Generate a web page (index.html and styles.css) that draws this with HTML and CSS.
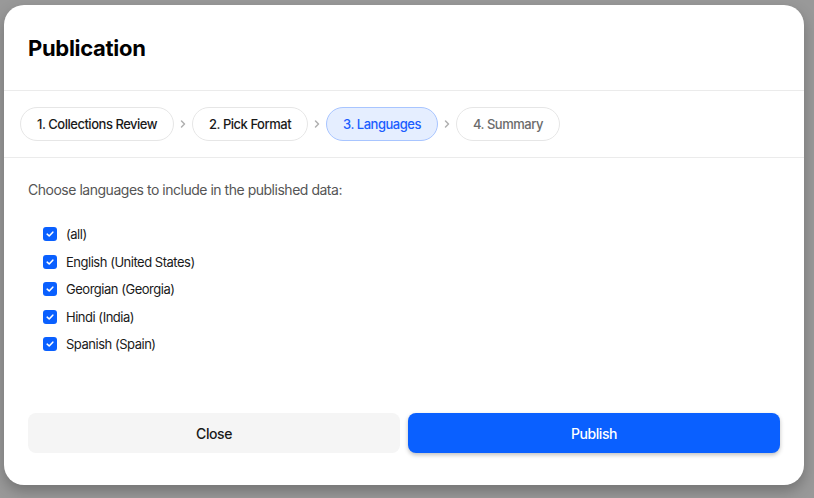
FILE: index.html
```html
<!DOCTYPE html>
<html lang="en">
<head>
    <meta charset="UTF-8">
    <meta name="viewport" content="width=device-width, initial-scale=1.0">
    <title>Publication</title>
    <link rel="stylesheet" href="styles.css">
</head>
<body>
    <div class="backdrop">
        <div class="modal">
            <div class="modal-header">
                <h1>Publication</h1>
            </div>

            <div class="steps">
                <div class="step">1. Collections Review</div>
                <span class="chevron"><svg width="8" height="10" viewBox="0 0 8 10"><path d="M2.5 2 L5.5 5 L2.5 8" fill="none" stroke="#b0b0b0" stroke-width="1.5" stroke-linecap="round" stroke-linejoin="round"/></svg></span>
                <div class="step">2. Pick Format</div>
                <span class="chevron"><svg width="8" height="10" viewBox="0 0 8 10"><path d="M2.5 2 L5.5 5 L2.5 8" fill="none" stroke="#b0b0b0" stroke-width="1.5" stroke-linecap="round" stroke-linejoin="round"/></svg></span>
                <div class="step active">3. Languages</div>
                <span class="chevron"><svg width="8" height="10" viewBox="0 0 8 10"><path d="M2.5 2 L5.5 5 L2.5 8" fill="none" stroke="#b0b0b0" stroke-width="1.5" stroke-linecap="round" stroke-linejoin="round"/></svg></span>
                <div class="step pending">4. Summary</div>
            </div>

            <div class="modal-body">
                <p class="hint">Choose languages to include in the published data:</p>
                <div class="lang-list">
                    <label class="lang"><span class="check"><svg width="10" height="10" viewBox="0 0 10 10"><path d="M2.2 5.2 L4.2 7 L7.8 3.2" fill="none" stroke="#fff" stroke-width="1.6" stroke-linecap="round" stroke-linejoin="round"/></svg></span>(all)</label>
                    <label class="lang"><span class="check"><svg width="10" height="10" viewBox="0 0 10 10"><path d="M2.2 5.2 L4.2 7 L7.8 3.2" fill="none" stroke="#fff" stroke-width="1.6" stroke-linecap="round" stroke-linejoin="round"/></svg></span>English (United States)</label>
                    <label class="lang"><span class="check"><svg width="10" height="10" viewBox="0 0 10 10"><path d="M2.2 5.2 L4.2 7 L7.8 3.2" fill="none" stroke="#fff" stroke-width="1.6" stroke-linecap="round" stroke-linejoin="round"/></svg></span>Georgian (Georgia)</label>
                    <label class="lang"><span class="check"><svg width="10" height="10" viewBox="0 0 10 10"><path d="M2.2 5.2 L4.2 7 L7.8 3.2" fill="none" stroke="#fff" stroke-width="1.6" stroke-linecap="round" stroke-linejoin="round"/></svg></span>Hindi (India)</label>
                    <label class="lang"><span class="check"><svg width="10" height="10" viewBox="0 0 10 10"><path d="M2.2 5.2 L4.2 7 L7.8 3.2" fill="none" stroke="#fff" stroke-width="1.6" stroke-linecap="round" stroke-linejoin="round"/></svg></span>Spanish (Spain)</label>
                </div>
            </div>

            <div class="modal-footer">
                <button class="btn btn-close">Close</button>
                <button class="btn btn-publish">Publish</button>
            </div>
        </div>
    </div>
</body>
</html>
```

FILE: styles.css
```css
body, html {
    margin: 0;
    padding: 0;
    height: 100%;
    font-family: 'Inter', 'Noto Sans', sans-serif;
    letter-spacing: -0.03em;
    background: #999999;
}

.backdrop {
    height: 100%;
    padding: 5px 0 0 4px;
    box-sizing: border-box;
}

.modal {
    width: 800px;
    height: 480px;
    background: #ffffff;
    border-radius: 20px;
    box-shadow: 0 6px 14px rgba(0, 0, 0, 0.25);
    display: flex;
    flex-direction: column;
    overflow: hidden;
}

.modal-header {
    height: 85px;
    display: flex;
    align-items: center;
    padding: 0 24px;
}

.modal-header h1 {
    margin: 0;
    font-size: 22px;
    font-weight: 700;
    color: #000;
    letter-spacing: -0.3px;
}

/* Step pills */
.steps {
    display: flex;
    align-items: center;
    padding: 16px 16px;
    border-top: 1px solid #ebebeb;
    border-bottom: 1px solid #ebebeb;
}

.step {
    height: 32px;
    padding: 0 16px;
    display: flex;
    align-items: center;
    border: 1px solid #e6e6e6;
    border-radius: 17px;
    font-size: 13px;
    font-weight: 500;
    color: #1a1a1a;
    white-space: nowrap;
}

.step.active {
    background: #e5eeff;
    border-color: #a8c5ff;
    color: #1a5dff;
}

.step.pending {
    color: #6b6b6b;
}

.chevron {
    width: 18px;
    display: flex;
    justify-content: center;
}

.modal-body {
    padding: 22px 24px 0;
}

.hint {
    margin: 0 0 24px;
    font-size: 14px;
    line-height: 20px;
    color: #555555;
}

.lang-list {
    display: flex;
    flex-direction: column;
    gap: 7.5px;
    padding-left: 15px;
}

.lang {
    display: flex;
    align-items: center;
    height: 20px;
    font-size: 13px;
    color: #1a1a1a;
}

.check {
    width: 14px;
    height: 14px;
    border-radius: 3px;
    background: #0a60ff;
    display: flex;
    align-items: center;
    justify-content: center;
    margin-right: 9px;
}

.modal-footer {
    margin-top: auto;
    display: flex;
    gap: 8px;
    padding: 0 24px 32px;
}

.btn {
    flex: 1;
    height: 40px;
    border: none;
    border-radius: 8px;
    font-family: inherit;
    font-size: 14px;
    font-weight: 500;
    letter-spacing: -0.03em;
    cursor: pointer;
}

.btn-close {
    background: #f5f5f5;
    color: #1a1a1a;
}

.btn-publish {
    background: #0a60ff;
    color: #ffffff;
    box-shadow: 0 2px 4px rgba(0, 0, 0, 0.25);
}
```
